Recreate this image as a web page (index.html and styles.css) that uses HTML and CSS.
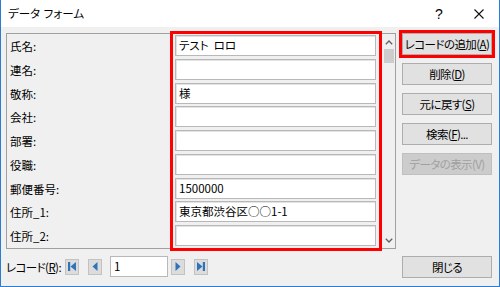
FILE: index.html
```html
<!DOCTYPE html>
<html lang="ja">
<head>
<meta charset="utf-8">
<title>データ フォーム</title>
<link rel="stylesheet" href="styles.css">
</head>
<body>
<div class="window">
  <div class="titlebar">
    <div class="title">データ&nbsp;フォーム</div>
    <div class="ctrl help">?</div>
    <div class="ctrl close">
      <svg width="10" height="10" viewBox="0 0 10 10"><path d="M0.5 0.5 L9.5 9.5 M9.5 0.5 L0.5 9.5" stroke="#111" stroke-width="1.1" fill="none"/></svg>
    </div>
  </div>
  <div class="main">
    <div class="left">
      <div class="panel">
        <div class="labels">
          <div class="label">氏名:</div>
          <div class="label">連名:</div>
          <div class="label">敬称:</div>
          <div class="label">会社:</div>
          <div class="label">部署:</div>
          <div class="label">役職:</div>
          <div class="label">郵便番号:</div>
          <div class="label">住所_1:</div>
          <div class="label">住所_2:</div>
        </div>
        <div class="fields">
          <div class="field">テスト&nbsp;&nbsp;ロロ</div>
          <div class="field"></div>
          <div class="field">様</div>
          <div class="field"></div>
          <div class="field"></div>
          <div class="field"></div>
          <div class="field">1500000</div>
          <div class="field">東京都渋谷区○○1-1</div>
          <div class="field"></div>
        </div>
        <div class="scrollbar">
          <svg class="arrow" width="8" height="5" viewBox="0 0 8 5"><path d="M0.8 4.2 L4 1 L7.2 4.2" stroke="#606060" stroke-width="1.3" fill="none"/></svg>
          <div class="thumb"></div>
          <div class="track"></div>
          <svg class="arrow" width="8" height="5" viewBox="0 0 8 5"><path d="M0.8 0.8 L4 4 L7.2 0.8" stroke="#606060" stroke-width="1.3" fill="none"/></svg>
        </div>
      </div>
      <div class="navrow">
        <div class="navlabel">レコード(<u>R</u>):</div>
        <div class="navbtn">
          <svg width="10" height="11" viewBox="0 0 10 11"><rect x="1" y="1" width="2.2" height="9" fill="#2f73b8"/><path d="M9 1 L3.5 5.5 L9 10 Z" fill="#2f73b8"/></svg>
        </div>
        <div class="navbtn">
          <svg width="10" height="11" viewBox="0 0 10 11"><path d="M7.5 1 L2.5 5.5 L7.5 10 Z" fill="#2f73b8"/></svg>
        </div>
        <div class="navinput">1</div>
        <div class="navbtn">
          <svg width="10" height="11" viewBox="0 0 10 11"><path d="M2.5 1 L7.5 5.5 L2.5 10 Z" fill="#2f73b8"/></svg>
        </div>
        <div class="navbtn">
          <svg width="10" height="11" viewBox="0 0 10 11"><path d="M1 1 L6.5 5.5 L1 10 Z" fill="#2f73b8"/><rect x="6.8" y="1" width="2.2" height="9" fill="#2f73b8"/></svg>
        </div>
      </div>
    </div>
    <div class="buttons">
      <div class="btn highlight">レコードの追加(<u>A</u>)</div>
      <div class="btn">削除(<u>D</u>)</div>
      <div class="btn">元に戻す(<u>S</u>)</div>
      <div class="btn">検索(<u>F</u>)...</div>
      <div class="btn disabled">データの表示(V)</div>
      <div class="btn close-btn">閉じる</div>
    </div>
  </div>
</div>
</body>
</html>
```
FILE: styles.css
```css
* { box-sizing: border-box; }
html, body { margin: 0; padding: 0; }
body {
  width: 500px;
  height: 287px;
  overflow: hidden;
  font-family: "Noto Sans CJK JP", "Noto Sans", sans-serif;
  font-size: 11.5px;
  font-feature-settings: "palt";
  color: #000;
  background: #f0f0f0;
}
.window {
  width: 500px;
  height: 287px;
  background: #f0f0f0;
  border-left: 1px solid #2b7cd3;
  border-right: 1px solid #2b7cd3;
  border-bottom: 1px solid #2b7cd3;
}
.titlebar {
  height: 27px;
  background: #fff;
  display: flex;
  align-items: center;
}
.title {
  flex: 1;
  padding-left: 7px;
  font-size: 11.5px;
  line-height: 27px;
  word-spacing: 1px;
}
.ctrl {
  height: 27px;
  display: flex;
  align-items: center;
  justify-content: center;
}
.help { width: 38px; font-size: 14px; font-family: "Liberation Sans", sans-serif; }
.close { width: 41px; }
.main {
  display: flex;
  gap: 6px;
  padding-left: 5px;
  margin-top: 6px;
  height: 245px;
}
.left {
  width: 390px;
  flex: none;
  display: flex;
  flex-direction: column;
}
.panel {
  height: 216px;
  border: 1px solid #a0a0a0;
  display: flex;
  padding-right: 1px;
}
.labels {
  width: 166px;
  flex: none;
  padding-left: 3px;
  padding-top: 2px;
}
.label {
  height: 21px;
  line-height: 21px;
  margin-bottom: 2.75px;
  white-space: nowrap;
}
.fields {
  width: 206px;
  flex: none;
  padding: 1px 3px 1px 2px;
  outline: 3px solid #f00;
  position: relative;
  z-index: 1;
}
.field {
  height: 21px;
  margin-bottom: 2.75px;
  background: #fff;
  border: 1px solid #b8b8b8;
  box-shadow: inset 1px 1px 0 #e3e3e3;
  padding-left: 3px;
  line-height: 19px;
  white-space: nowrap;
}
.field:last-child { margin-bottom: 0; }
.scrollbar {
  width: 11px;
  flex: none;
  margin-left: 4px;
  display: flex;
  flex-direction: column;
  align-items: center;
  padding-top: 6px;
}
.arrow { display: block; flex: none; }
.thumb {
  width: 10px;
  height: 14px;
  background: #cdcdcd;
  margin-top: 4px;
}
.track { flex: 1; }
.scrollbar .arrow:last-child { margin-bottom: 5px; }
.navrow {
  display: flex;
  align-items: center;
  margin-top: 7px;
  height: 21px;
}
.navlabel {
  width: 59px;
  flex: none;
  white-space: nowrap;
  letter-spacing: -0.6px;
}
.navbtn {
  width: 14px;
  height: 16px;
  flex: none;
  background: #dcdcdc;
  border: 1px solid #c2c2c2;
  display: flex;
  align-items: center;
  justify-content: center;
  margin-right: 9px;
}
.navinput {
  width: 58px;
  height: 21px;
  flex: none;
  background: #fff;
  border: 1px solid #b8b8b8;
  line-height: 19px;
  padding-left: 3px;
  margin-left: -1px;
  margin-right: 3px;
}
.buttons {
  width: 90px;
  flex: none;
  display: flex;
  flex-direction: column;
  gap: 8px;
}
.btn {
  height: 22px;
  flex: none;
  background: #e1e1e1;
  border: 1px solid #adadad;
  display: flex;
  align-items: center;
  justify-content: center;
  white-space: nowrap;
  letter-spacing: -0.6px;
}
.btn.highlight {
  outline: 3px solid #f00;
  outline-offset: 0px;
}
.btn.disabled {
  background: #cccccc;
  border-color: #bfbfbf;
  color: #a0a0a0;
}
.btn.close-btn { margin-top: auto; }
u { text-underline-offset: 1px; }
```
